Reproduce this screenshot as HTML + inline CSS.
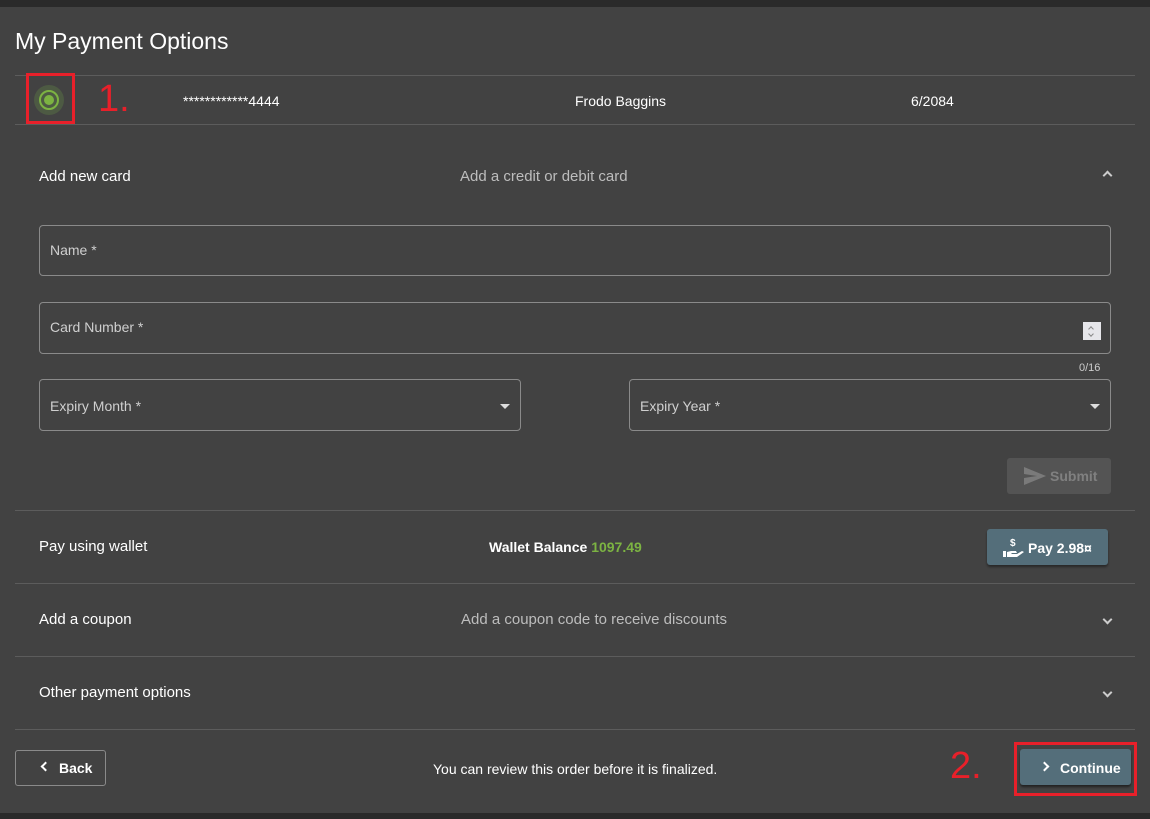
<!DOCTYPE html>
<html><head><style>
body{margin:0;width:1150px;height:819px;background:#2a2a2a;font-family:"Liberation Sans",sans-serif;color:#fff;position:relative;overflow:hidden}
.p{position:absolute;left:0;top:7px;width:1150px;height:806px;background:#424242}
.a{position:absolute}
.ln{position:absolute;left:15px;width:1120px;height:1px;background:#5c5c5c}
.t{position:absolute;font-size:14px;line-height:16px}
.f{position:absolute;border:1px solid #8a8a8a;border-radius:4px;box-sizing:border-box}
.lab{position:absolute;left:10px;font-size:14px;color:#cfcfcf}
.g{color:#bdbdbd}
.car{position:absolute;width:0;height:0;border-left:5px solid transparent;border-right:5px solid transparent;border-top:5px solid #ddd}
.chev{position:absolute;width:5px;height:5px;border-right:2px solid #ccc;border-bottom:2px solid #ccc}
</style></head><body>
<div class="p"></div>
<div class="t" style="left:15px;top:28px;font-size:23px;line-height:26px">My Payment Options</div>
<div class="ln" style="top:75px"></div>
<div class="ln" style="top:124px"></div>
<div class="a" style="left:34px;top:85px;width:30px;height:30px;border-radius:50%;background:#4d5a43"></div>
<div class="a" style="left:39px;top:90px;width:16px;height:16px;border-radius:50%;border:2px solid #7cb342"></div>
<div class="a" style="left:44px;top:95px;width:10px;height:10px;border-radius:50%;background:#7cb342"></div>
<div class="a" style="left:26px;top:73px;width:43px;height:45px;border:3px solid #e8202a"></div>
<div class="t" style="left:98px;top:78px;font-size:38px;line-height:42px;color:#e8202a">1.</div>
<div class="t" style="left:183px;top:93px">************4444</div>
<div class="t" style="left:575px;top:93px">Frodo Baggins</div>
<div class="t" style="left:911px;top:93px">6/2084</div>

<div class="t" style="left:39px;top:169px;font-size:15px">Add new card</div>
<div class="t g" style="left:460px;top:169px;font-size:15px">Add a credit or debit card</div>
<div class="chev" style="left:1104px;top:172px;transform:rotate(-135deg)"></div>

<div class="f" style="left:39px;top:225px;width:1072px;height:51px"><div class="lab" style="top:16px">Name *</div></div>
<div class="f" style="left:39px;top:302px;width:1072px;height:52px"><div class="lab" style="top:16px">Card Number *</div>
<div class="a" style="left:1043px;top:19px;width:18px;height:18px;background:#e6e6ea"><div class="chev" style="left:6px;top:5px;width:3px;height:3px;border-width:1px;border-color:#888;transform:rotate(-135deg)"></div><div class="chev" style="left:6px;top:10px;width:3px;height:3px;border-width:1px;border-color:#888;transform:rotate(45deg)"></div></div></div>
<div class="t" style="left:1079px;top:360px;font-size:11px;color:#ccc">0/16</div>
<div class="f" style="left:39px;top:379px;width:482px;height:52px"><div class="lab" style="top:18px">Expiry Month *</div><div class="car" style="left:460px;top:24px"></div></div>
<div class="f" style="left:629px;top:379px;width:482px;height:52px"><div class="lab" style="top:18px">Expiry Year *</div><div class="car" style="left:460px;top:24px"></div></div>
<div class="a" style="left:1007px;top:458px;width:104px;height:36px;background:#545454;border-radius:3px"></div>
<svg class="a" style="left:1023px;top:466px" width="24" height="20" viewBox="0 0 24 20"><path d="M1 1 L23 10 L1 19 L1 12 L14 10 L1 8Z" fill="#7a7a7a"/></svg>
<div class="t" style="left:1050px;top:468px;color:#808080;font-weight:bold">Submit</div>

<div class="ln" style="top:510px"></div>
<div class="t" style="left:39px;top:539px;font-size:15px">Pay using wallet</div>
<div class="t" style="left:489px;top:539px;font-weight:bold">Wallet Balance <span style="color:#7cb342">1097.49</span></div>
<div class="a" style="left:987px;top:529px;width:121px;height:36px;background:#546e7a;border-radius:3px;box-shadow:0 2px 2px rgba(0,0,0,.4)"></div>
<div class="t" style="left:1010px;top:536px;font-size:10px;font-weight:bold">$</div>
<svg class="a" style="left:1002px;top:546px" width="22" height="12"><path d="M1 5h3v6H1z M5 6l4-1h5l1 2h-5l-1 1h6l5-3 2 1-7 5H5z" fill="#fff"/></svg>
<div class="t" style="left:1028px;top:540px;font-weight:bold">Pay 2.98¤</div>

<div class="ln" style="top:583px"></div>
<div class="t" style="left:39px;top:612px;font-size:15px">Add a coupon</div>
<div class="t g" style="left:461px;top:612px;font-size:15px">Add a coupon code to receive discounts</div>
<div class="chev" style="left:1104px;top:616px;transform:rotate(45deg)"></div>
<div class="ln" style="top:656px"></div>
<div class="t" style="left:39px;top:685px;font-size:15px">Other payment options</div>
<div class="chev" style="left:1104px;top:689px;transform:rotate(45deg)"></div>
<div class="ln" style="top:729px"></div>

<div class="a" style="left:15px;top:750px;width:89px;height:34px;border:1px solid #8a8a8a;border-radius:3px"></div>
<div class="chev" style="left:42px;top:763px;transform:rotate(135deg);border-color:#fff"></div>
<div class="t" style="left:59px;top:760px;font-weight:bold">Back</div>
<div class="t" style="left:433px;top:761px">You can review this order before it is finalized.</div>
<div class="t" style="left:950px;top:745px;font-size:38px;line-height:42px;color:#e8202a">2.</div>
<div class="a" style="left:1014px;top:742px;width:117px;height:48px;border:3px solid #e8202a"></div>
<div class="a" style="left:1020px;top:749px;width:111px;height:36px;background:#546e7a;border-radius:3px;box-shadow:0 2px 2px rgba(0,0,0,.5)"></div>
<div class="chev" style="left:1041px;top:763px;transform:rotate(-45deg);border-color:#fff"></div>
<div class="t" style="left:1060px;top:760px;font-weight:bold">Continue</div>
</body></html>
